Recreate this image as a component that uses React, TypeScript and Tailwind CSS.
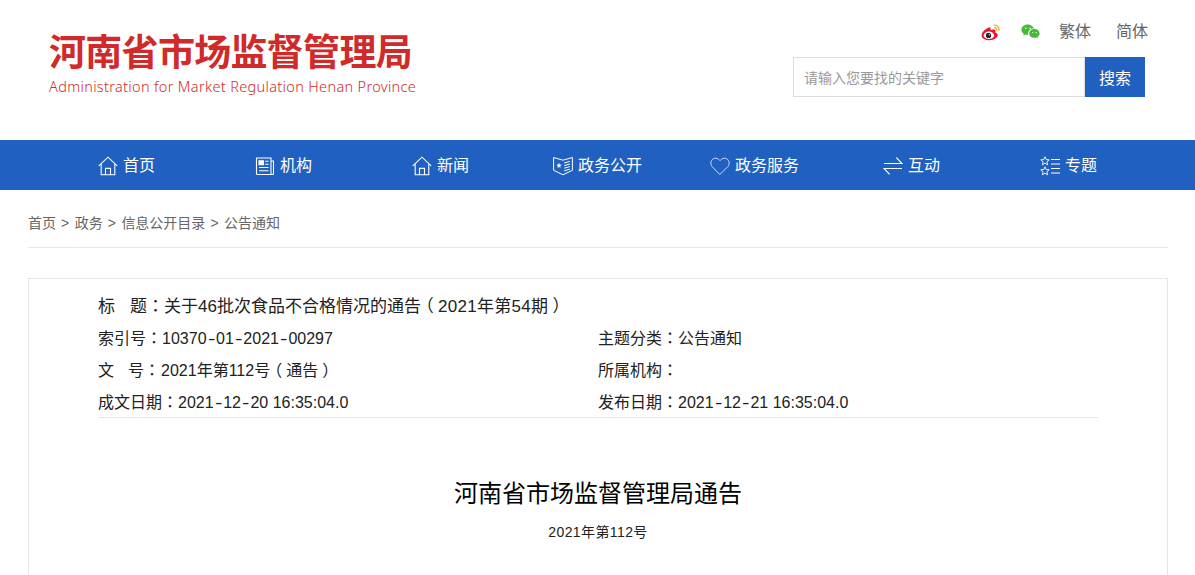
const font = { fontFamily: '"Liberation Sans", "Noto Sans CJK SC", sans-serif' };

const HomeIcon = () => (
  <svg width="20" height="20" viewBox="0 0 20 20" fill="none" stroke="currentColor" strokeWidth="1.1">
    <path d="M0.800 9.800 10 1.200l9.200 8.600M3.200 8.200v10.600h13.600V8.200M7.500 18.800v-6.400h5v6.400" />
  </svg>
);

const OrgIcon = () => (
  <svg width="20" height="20" viewBox="0 0 20 20" fill="none" stroke="currentColor" strokeWidth="1.1">
    <path d="M1.500 2h14.500v16.500H2.500a1 1 0 0 1-1-1zM16 5h2.500v12.500a1 1 0 0 1-1 1H16" />
    <path d="M4 4.800h4.500v4H4z" fill="currentColor" />
    <path d="M10.200 5.300h3.400M10.200 8.300h3.400M4 11.500h9.600M4 14.800h9.600" />
  </svg>
);

const OpenIcon = () => (
  <svg width="20" height="20" viewBox="0 0 20 20" fill="none" stroke="currentColor" strokeWidth="1">
    <path d="M0.600 1.500 10 4.200l9.400-2.700v12.800L10 18.800.6 14.300z" />
    <path d="m6 6.800.8 1.700 1.800.2-1.300 1.200.3 1.800L6 11l-1.600.7.300-1.800-1.300-1.200 1.800-.2z" fill="currentColor" stroke="none" />
    <path d="m11.200 7 5.600-1.600M11.200 9.600l5.600-1.600M11.200 12.200l5.600-1.600M11.200 14.800l5.600-1.600" />
  </svg>
);

const HeartIcon = () => (
  <svg width="20" height="20" viewBox="0 0 20 20" fill="none" stroke="#dfe8f6" strokeWidth="0.9">
    <path d="M9.800 18.600 2 10.400C-.2 7.900.8 3.300 4.400 2.300 6.600 1.700 8.700 2.900 10 4.700c1.300-1.800 3.400-3 5.600-2.400 3.600 1 4.600 5.600 2.400 8.100z" />
  </svg>
);

const SwapIcon = () => (
  <svg width="20" height="20" viewBox="0 0 20 20" fill="none" stroke="currentColor" strokeWidth="1.2">
    <path d="M1 7.500h18L13.400 1.600M19 12.500H1l5.600 5.900" />
  </svg>
);

const TopicIcon = () => (
  <svg width="20" height="20" viewBox="0 0 20 20" fill="none" stroke="currentColor" strokeWidth="0.9">
    <path d="m5 .8 1.200 2.800 3 .2-2.300 2 .7 3L5 7.200 2.400 8.800l.7-3-2.300-2 3-.2zM5 10.800l1.200 2.800 3 .2-2.300 2 .7 3L5 17.200l-2.600 1.600.7-3-2.300-2 3-.2z" />
    <path d="M11 3.500h9M11 8h9M11 12.500h9M11 17h9" strokeWidth="1" />
  </svg>
);

const WeiboIcon = () => (
  <svg width="20" height="18" viewBox="0 0 20 18">
    <path d="M8.200 4.500C4.500 5.600.6 9.400.6 12.400c0 2.900 3.800 4.900 7.800 4.900 4.800 0 8.300-2.800 8.300-5.200 0-1.700-1.600-2.300-2.500-2.600.4-1.200.4-2.400-.7-2.900-1.200-.5-3 .2-3.900.7.300-1.500-.4-3.600-1.400-2.800z" fill="#e6162d" />
    <ellipse cx="7.900" cy="12.300" rx="5.200" ry="3.700" fill="#fff" />
    <circle cx="7.500" cy="12.400" r="2.600" fill="#222" />
    <circle cx="8.300" cy="11.700" r=".6" fill="#fff" />
    <path d="M13.500 2.100c2.600-.4 5 2 4.400 5.200M13.800 4.700c1.200-.2 2 .9 1.800 2.100" fill="none" stroke="#f5a623" strokeWidth="1.300" strokeLinecap="round" />
  </svg>
);

const WechatIcon = () => (
  <svg width="19" height="16" viewBox="0 0 19 16">
    <path d="M6.800.6C3.200.6.400 2.900.400 5.800c0 1.700.9 3 2.400 4.100l-.6 1.800 2.100-1.100c.8.200 1.500.3 2.300.3h.6a5 5 0 0 1-.2-1.400c0-2.700 2.500-4.900 5.500-4.900h.6C12.100 2.300 9.700.6 6.800.6z" fill="#46bb36" />
    <path d="M18.600 9.400c0-2.400-2.400-4.400-5.200-4.400-3 0-5.200 2-5.200 4.400s2.300 4.400 5.200 4.400c.6 0 1.200-.1 1.800-.3l1.700.9-.5-1.500c1.300-.8 2.200-2.100 2.200-3.500z" fill="#46bb36" />
    <circle cx="4.700" cy="4.300" r=".8" fill="#fff" />
    <circle cx="9" cy="4.300" r=".8" fill="#fff" />
    <circle cx="11.600" cy="8.600" r=".7" fill="#fff" />
    <circle cx="15.200" cy="8.600" r=".7" fill="#fff" />
  </svg>
);

const navItems = [
  { label: "首页", icon: <HomeIcon /> },
  { label: "机构", icon: <OrgIcon /> },
  { label: "新闻", icon: <HomeIcon /> },
  { label: "政务公开", icon: <OpenIcon /> },
  { label: "政务服务", icon: <HeartIcon /> },
  { label: "互动", icon: <SwapIcon /> },
  { label: "专题", icon: <TopicIcon /> },
];

const crumbs = ["首页", "政务", "信息公开目录", "公告通知"];

// the fullwidth colon sits centred in the original, TC has that form
const P = ({ c }: { c: string }) => <span className="font-['Noto_Sans_CJK_TC']">{c}</span>;
// brackets centred too: halt drops the blank half, padding puts it back on both sides
const B = ({ c }: { c: string }) => <span className="px-[0.25em] [font-feature-settings:'halt']">{c}</span>;
// wide hyphen, one digit across
const H = () => <span className="inline-block w-[9.500px] scale-x-[1.4] text-center">-</span>;

const App = () => {
  return (
    <div className="h-[575px] overflow-hidden bg-white" style={font}>
      <header className="flex h-[140px] justify-between pr-[50px] pl-[49px]">
        <div className="pt-[31px]">
          <h1 className="text-[37px] leading-[46px] font-bold tracking-[-0.7px] text-[#d02a2a]">河南省市场监督管理局</h1>
          <p className="font-['Noto_Sans'] text-[14.500px] leading-[19px] font-light tracking-[0.330px] text-[#d02a2a]">
            Administration for Market Regulation Henan Province
          </p>
        </div>
        <div className="flex w-[352px] flex-col items-end">
          <div className="mt-[20px] flex h-[24px] items-center text-[16px] text-[#666]">
            <WeiboIcon />
            <span className="ml-[20px]"><WechatIcon /></span>
            <span className="ml-[19px]">繁体</span>
            <span className="mr-[-3px] ml-[25px]">简体</span>
          </div>
          <div className="mt-[13px] flex h-[40px] w-[352px]">
            <div className="flex flex-1 items-center border border-[#ddd] pt-[2px] pl-[10px] text-[14px] text-[#999]">请输入您要找的关键字</div>
            <div className="flex w-[60px] items-center justify-center bg-[#2060c0] pt-[3px] text-[16px] text-white">搜索</div>
          </div>
        </div>
      </header>

      <nav className="h-[50px] bg-[#2060c0] px-[48px]">
        <ul className="grid h-full grid-cols-7">
          {navItems.map((item) => (
            <li key={item.label} className="flex items-center justify-center gap-[5px] pt-[2px] text-[16px] text-white">
              {item.icon}
              <span>{item.label}</span>
            </li>
          ))}
        </ul>
      </nav>

      <div className="mr-[27px] ml-[28px] flex h-[58px] items-center gap-[5px] border-b border-[#e8e8e8] pt-[10px] text-[14px] text-[#666]">
        {crumbs.map((crumb, i) => (
          <span key={crumb} className="flex items-center gap-[5.500px]">
            {i > 0 && <span>&gt;</span>}
            {crumb}
          </span>
        ))}
      </div>

      <main className="mt-[30px] mr-[27px] ml-[28px] border border-[#e5e5e5] px-[69px]">
        <div className="h-[139px] border-b border-[#e5e5e5] pt-[10px] text-[16px] leading-[32px] text-[#222]">
          <p className="h-8 text-[17px]">
            标<span className="ml-[15px]">题</span><P c="：" />关于46批次食品不合格情况的通告<B c="（" />
            <span className="tracking-[0.3px]">2021年第54期</span><B c="）" />
          </p>
          <div className="grid auto-rows-[32px] grid-cols-2">
            <p>索引号<P c="：" />10370<H />01<H />2021<H />00297</p>
            <p>主题分类<P c="：" />公告通知</p>
            <p>文<span className="ml-[14px]">号</span><P c="：" /><span className="ml-[1px]">2021年第112号</span><B c="（" />通告<B c="）" /></p>
            <p>所属机构<P c="：" /></p>
            <p>成文日期<P c="：" />2021<H />12<H />20 16:35:04.0</p>
            <p>发布日期<P c="：" />2021<H />12<H />21 16:35:04.0</p>
          </div>
        </div>
        <h2 className="mt-[58px] text-center text-[24px] leading-[36px] text-black">河南省市场监督管理局通告</h2>
        <p className="mt-[8px] text-center text-[14px] leading-[24px] tracking-[0.4px] text-[#222]">2021年第112号</p>
        <div className="h-[60px]" />
      </main>
    </div>
  );
};

export default App;
